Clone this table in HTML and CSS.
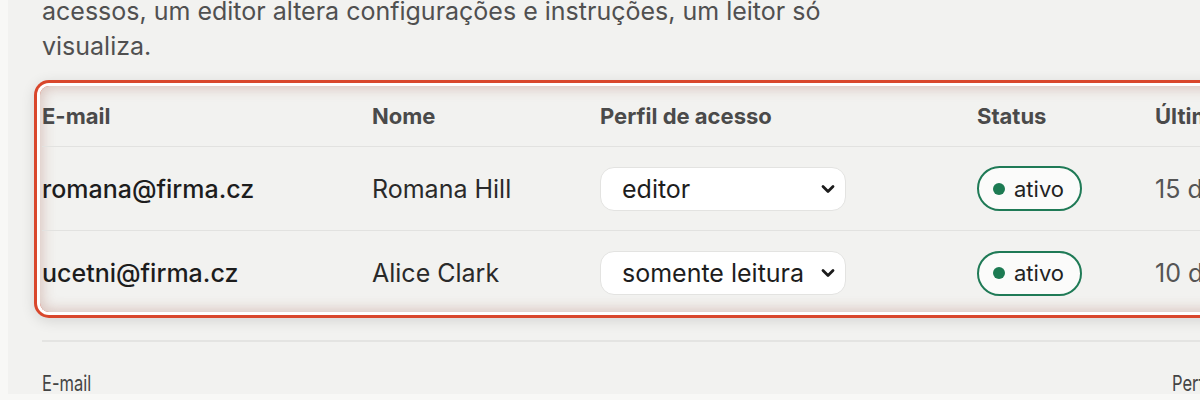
FILE: index.html
```html
<!DOCTYPE html>
<html lang="pt">
<head>
<meta charset="utf-8">
<link rel="stylesheet" href="styles.css">
</head>
<body>
<div class="page">
  <p class="intro">acessos, um editor altera configurações e instruções, um leitor só<br>visualiza.</p>

  <div class="highlight">
    <div class="table">
      <div class="row head">
        <div>E-mail</div><div>Nome</div><div>Perfil de acesso</div><div>Status</div><div>Último acesso</div>
      </div>
      <div class="row">
        <div class="email">romana@firma.cz</div>
        <div class="name">Romana Hill</div>
        <div><div class="select"><span>editor</span><svg width="14" height="10" viewBox="0 0 14 10"><path d="M2 2.5l5 5 5-5" fill="none" stroke="#1c1c1c" stroke-width="2.8" stroke-linecap="round" stroke-linejoin="round"/></svg></div></div>
        <div><span class="badge"><i class="dot"></i>ativo</span></div>
        <div class="date">15 de março</div>
      </div>
      <div class="row last">
        <div class="email">ucetni@firma.cz</div>
        <div class="name">Alice Clark</div>
        <div><div class="select"><span>somente leitura</span><svg width="14" height="10" viewBox="0 0 14 10"><path d="M2 2.5l5 5 5-5" fill="none" stroke="#1c1c1c" stroke-width="2.8" stroke-linecap="round" stroke-linejoin="round"/></svg></div></div>
        <div><span class="badge"><i class="dot"></i>ativo</span></div>
        <div class="date">10 de março</div>
      </div>
    </div>
  </div>

  <div class="sub">
    <div class="subhead">
      <span class="narrow">E-mail</span><span class="narrow">Perfil</span>
    </div>
  </div>
</div>
</body>
</html>
```
FILE: styles.css
```css
html, body {
  margin: 0;
  padding: 0;
  background: #f8f8f6;
  overflow: hidden;
  width: 1200px;
  height: 400px;
}
body {
  font-family: Inter, "Noto Sans", "Liberation Sans", sans-serif;
  color: #222;
}
.page {
  margin-left: 8px;
  background: #f2f2f0;
  height: 400px;
  padding-left: 34px;
  box-sizing: border-box;
}
.intro {
  margin: -6px 0 0;
  font-size: 25px;
  line-height: 35px;
  color: #505050;
  white-space: nowrap;
}
.highlight {
  margin: 22px 0 0 -2px;
  padding-left: 2px;
  width: 1300px;
  height: 226px;
  border-radius: 9px;
  box-shadow:
    inset 0 0 14px 2px rgba(150, 70, 50, 0.28),
    0 0 0 3px #ffffff,
    0 0 0 6px #d9472c,
    0 3px 14px 6px rgba(0, 0, 0, 0.12);
}
.table {
  width: 100%;
}
.row {
  display: grid;
  grid-template-columns: 330px 228px 377px 178px 1fr;
  align-items: center;
  height: 84px;
  box-sizing: border-box;
  border-bottom: 1px solid #e2e2e0;
  font-size: 25px;
}
.row.head {
  height: 61px;
  font-size: 22px;
  font-weight: 700;
  color: #4a4a4a;
}
.row.last {
  border-bottom: none;
}
.email {
  font-weight: 500;
  color: #1d1d1d;
}
.name {
  color: #2a2a2a;
}
.select {
  width: 246px;
  height: 44px;
  box-sizing: border-box;
  background: #fff;
  border: 1px solid #e3e3e1;
  border-radius: 14px;
  display: flex;
  align-items: center;
  justify-content: space-between;
  padding: 0 10px 0 21px;
  color: #1d1d1d;
  font-size: 25px;
}
.badge {
  display: inline-flex;
  align-items: center;
  gap: 9px;
  height: 45px;
  box-sizing: border-box;
  padding: 0 16px 0 14px;
  border: 2px solid #1f7a56;
  border-radius: 23px;
  font-size: 22px;
  color: #222;
  background: #fbfbfa;
}
.dot {
  width: 12px;
  height: 12px;
  border-radius: 50%;
  background: #1c7a52;
  display: inline-block;
}
.date {
  color: #555;
  white-space: nowrap;
}
.sub {
  margin-top: 28px;
  border-top: 2px solid #e4e4e2;
  width: 1200px;
}
.subhead {
  display: grid;
  grid-template-columns: 1130px 60px;
  padding-top: 26px;
  font-size: 22px;
  line-height: 30px;
  color: #444;
}
.narrow {
  display: inline-block;
  white-space: nowrap;
  transform: scaleX(0.75);
  transform-origin: left center;
}
```
